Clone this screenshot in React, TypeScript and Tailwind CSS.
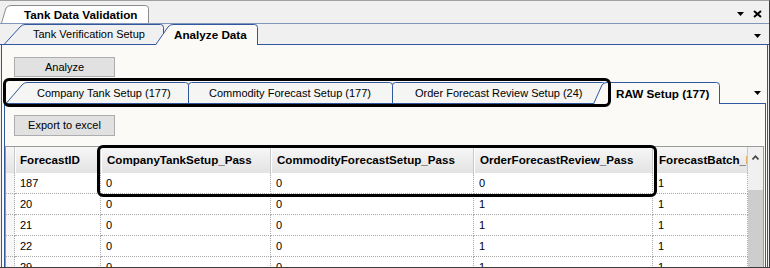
import React from "react";

type ShapeProps = { w: number; h: number; slant: number; fill: string; stroke: string };

function TabShape({ w, h, slant, fill, stroke }: ShapeProps) {
  const r = w - 0.5;
  const d = slant
    ? `M0.5 ${h} L${slant - 2} 3 Q${slant} 0.5 ${slant + 3} 0.5 L${r - 3} 0.5 Q${r} 0.5 ${r} 3.5 L${r} ${h}`
    : `M0.5 ${h} L0.5 3.5 Q0.5 0.5 3.5 0.5 L${r - 3} 0.5 Q${r} 0.5 ${r} 3.5 L${r} ${h}`;
  return (
    <svg className="absolute inset-0" width={w} height={h} viewBox={`0 0 ${w} ${h}`}>
      <path d={d} fill={fill} stroke={stroke} strokeWidth={1} />
    </svg>
  );
}

type TabProps = ShapeProps & { label: string; className: string };

function Tab({ w, h, slant, fill, stroke, label, className }: TabProps) {
  return (
    <div className={`relative flex shrink-0 items-center whitespace-nowrap ${className}`}>
      <TabShape w={w} h={h} slant={slant} fill={fill} stroke={stroke} />
      <span className="relative pt-px">{label}</span>
    </div>
  );
}

function Caret() {
  return (
    <svg width="7" height="4" viewBox="0 0 7 4">
      <path d="M0 0H7L3.5 4Z" fill="#000" />
    </svg>
  );
}

function CloseX() {
  return (
    <svg width="9" height="8" viewBox="0 0 9 8">
      <path d="M1 1L8 7M8 1L1 7" stroke="#000" strokeWidth="2" />
    </svg>
  );
}

const headers = ["ForecastID", "CompanyTankSetup_Pass", "CommodityForecastSetup_Pass", "OrderForecastReview_Pass", "ForecastBatch_Pass"];

const rows = [
  ["187", "0", "0", "0", "1"],
  ["20", "0", "0", "1", "1"],
  ["21", "0", "0", "1", "1"],
  ["22", "0", "0", "1", "1"],
  ["29", "0", "0", "1", "1"],
];

const BLUE = "#31579f";

export default function App() {
  return (
    <div className="relative flex h-[268px] w-[770px] flex-col overflow-hidden border-t border-r border-b border-t-[#a0a0a0] border-r-[#3c3c3c] border-b-[#3c3c3c] bg-[#f0f0f0] font-['Liberation_Sans',Arial,sans-serif] text-[11px] text-black">
      {/* document title strip */}
      <div className="flex h-[23px] shrink-0 items-end border-b border-[#8296bb]">
        <Tab className="ml-px h-[18px] w-[148px] pl-[23px] text-[11.7px] font-bold" w={148} h={18} slant={7} fill="#ffffff" stroke="#8c8c8c" label="Tank Data Validation" />
        <div className="mr-[7px] mb-[5px] ml-auto flex items-center gap-[9px]">
          <Caret />
          <CloseX />
        </div>
      </div>

      {/* page tabs */}
      <div className="flex h-[21px] shrink-0 items-end border-b border-[#31579f]">
        <Tab className="ml-[4px] h-[20px] w-[160px] pl-[29px]" w={160} h={20} slant={18} fill="#f0f0f0" stroke={BLUE} label="Tank Verification Setup" />
        <Tab className="-mb-px -ml-[9px] h-[21px] w-[103px] pl-[19px] text-[11.7px] font-bold" w={103} h={21} slant={15} fill="#fbfaf6" stroke={BLUE} label="Analyze Data" />
        <div className="mr-[8px] mb-[6px] ml-auto flex">
          <Caret />
        </div>
      </div>

      {/* content */}
      <div className="ml-px mr-px flex min-h-0 flex-1 flex-col border-r border-l border-[#31579f] bg-[#fbfaf6]">
        <button className="mt-[12px] ml-[12px] h-[20px] w-[101px] shrink-0 border border-[#adadad] bg-[#e1e1e1] text-[11px]">Analyze</button>

        <div className="mt-px mr-px ml-[2px] flex h-[26px] shrink-0 items-end border-b border-[#31579f] pl-[2px]">
          <Tab className="h-[21px] w-[183px] pl-[31px]" w={183} h={21} slant={18} fill="#f5f5f3" stroke={BLUE} label="Company Tank Setup (177)" />
          <Tab className="-ml-px h-[21px] w-[205px] pl-[21px]" w={205} h={21} slant={0} fill="#f5f5f3" stroke={BLUE} label="Commodity Forecast Setup (177)" />
          <Tab className="-ml-px h-[21px] w-[214px] pl-[23px]" w={214} h={21} slant={0} fill="#f5f5f3" stroke={BLUE} label="Order Forecast Review Setup (24)" />
          <Tab className="-mb-px -ml-[13px] h-[22px] w-[127px] pl-[23px] text-[11.7px] font-bold" w={127} h={22} slant={11} fill="#fbfaf6" stroke={BLUE} label="RAW Setup (177)" />
          <div className="mr-[5px] mb-[8px] ml-auto flex">
            <Caret />
          </div>
        </div>

        <div className="mr-px ml-[2px] flex min-h-0 flex-1 flex-col overflow-hidden border-r border-l border-[#31579f]">
          <button className="mt-[11px] ml-[9px] h-[21px] w-[101px] shrink-0 border border-[#adadad] bg-[#e1e1e1] text-[11px]">Export to excel</button>

          {/* grid */}
          <div className="mt-[10px] mr-px flex min-h-0 flex-1 overflow-hidden border-t border-r border-l border-[#9a9a9a] bg-white">
            <div className="flex min-w-0 flex-1 flex-col">
              <div className="grid h-[26px] shrink-0 grid-cols-[9px_86px_170px_203px_179px_95px] text-[11.6px] font-bold">
                <div className="border-r border-[#c8c8c8] bg-linear-to-b from-[#f7f7f7] to-[#e3e3e3]" />
                {headers.map((h, i) => (
                  <div key={h} className={`flex items-center overflow-hidden border-r border-l border-r-[#c8c8c8] border-l-white bg-linear-to-b from-[#f7f7f7] to-[#e3e3e3] whitespace-nowrap ${i === 0 ? "pl-[4px]" : "pl-[5px]"}`}>
                    {h}
                  </div>
                ))}
              </div>
              {rows.map((r, ri) => (
                <div key={ri} className="grid h-[21px] shrink-0 grid-cols-[9px_86px_170px_203px_179px_95px]">
                  <div className="border-r border-b border-dotted border-[#a8a8a8] bg-[#f7f7f7]" />
                  {r.map((v, ci) => (
                    <div key={ci} className="flex items-center border-r border-b border-dotted border-[#a8a8a8] pl-[5px]">
                      {v}
                    </div>
                  ))}
                </div>
              ))}
            </div>
            <div className="flex w-[15px] shrink-0 flex-col">
              <div className="flex h-[43px] justify-center bg-[#f0f0f0] pt-[8px]">
                <svg width="7" height="5" viewBox="0 0 7 5">
                  <path d="M0.5 4.5L3.5 1.2L6.5 4.5" fill="none" stroke="#404040" strokeWidth="1.6" />
                </svg>
              </div>
              <div className="flex-1 bg-[#cdcdcd]" />
            </div>
          </div>
        </div>
      </div>

      {/* annotation outlines */}
      <div className="pointer-events-none absolute top-[77px] left-[3px] h-[29px] w-[608px] rounded-[6px] border-[3px] border-black" />
      <div className="pointer-events-none absolute top-[144px] left-[97px] h-[52px] w-[560px] rounded-[6px] border-[3px] border-black" />
    </div>
  );
}
